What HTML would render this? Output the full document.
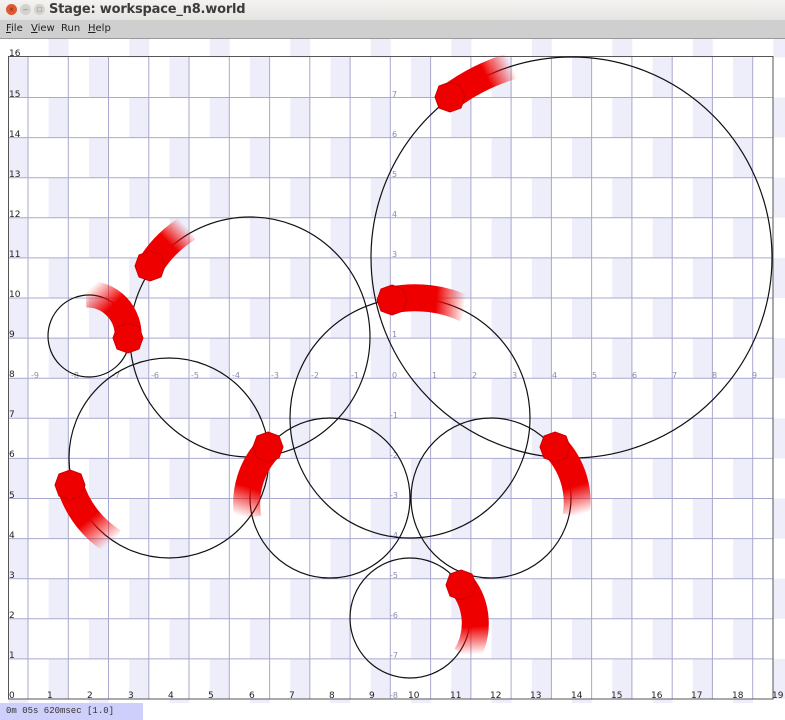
<!DOCTYPE html>
<html><head><meta charset="utf-8">
<style>
html,body{margin:0;padding:0;width:785px;height:720px;overflow:hidden;background:#fff;font-family:"Liberation Sans",sans-serif}
#title{position:absolute;left:0;top:0;width:785px;height:20px;background:linear-gradient(#f4f3f1,#e6e4e1);}
#title .t{position:absolute;left:49px;top:2px;font-size:13px;font-weight:bold;color:#3c3c3c;font-family:"DejaVu Sans","Liberation Sans",sans-serif;letter-spacing:-0.2px}
.b{position:absolute;top:4px;width:11px;height:11px;border-radius:50%;font-size:8px;line-height:11px;text-align:center}
#menu{position:absolute;left:0;top:20px;width:785px;height:18px;background:#cfcfcf;border-bottom:1px solid #9a9a9a}
#menu span{position:absolute;top:3px;font-size:10px;color:#222;font-family:"DejaVu Sans","Liberation Sans",sans-serif}
#status{position:absolute;left:0;top:703px;width:143px;height:17px;background:#cfcffb;font-family:"Liberation Mono",monospace;font-size:9px;line-height:17px;padding-left:6px;box-sizing:border-box;color:#333}
svg{position:absolute;left:0;top:39px}
</style></head><body>
<div id="title">
<div class="b" style="left:6px;background:#e4572e;color:#7a2a12">×</div>
<div class="b" style="left:20px;background:#d4d2cf;color:#777">–</div>
<div class="b" style="left:34px;background:#d4d2cf;color:#777">□</div>
<div class="t">Stage: workspace_n8.world</div>
</div>
<div id="menu"><span style="left:6px"><u>F</u>ile</span><span style="left:31px"><u>V</u>iew</span><span style="left:61px">Run</span><span style="left:88px"><u>H</u>elp</span></div>
<svg width="785" height="664" viewBox="0 39 785 664" xmlns="http://www.w3.org/2000/svg">
<defs>
<pattern id="chk" patternUnits="userSpaceOnUse" x="8.4" y="699" width="80.52" height="80.2">
<rect x="40.26" y="40.1" width="20" height="40.1" fill="#eeeefa"/>
<rect x="0" y="0" width="20" height="40.1" fill="#eeeefa"/>
</pattern>
<linearGradient id="gA" gradientUnits="userSpaceOnUse" x1="450" y1="97" x2="512" y2="66"><stop offset="0.6" stop-color="#e00" stop-opacity="1"/><stop offset="1" stop-color="#e00" stop-opacity="0"/></linearGradient>
<linearGradient id="gB" gradientUnits="userSpaceOnUse" x1="150" y1="266" x2="188" y2="228"><stop offset="0.55" stop-color="#e00"/><stop offset="1" stop-color="#e00" stop-opacity="0"/></linearGradient>
<linearGradient id="gC" gradientUnits="userSpaceOnUse" x1="128" y1="338" x2="86" y2="292"><stop offset="0.55" stop-color="#e00"/><stop offset="1" stop-color="#e00" stop-opacity="0"/></linearGradient>
<linearGradient id="gD" gradientUnits="userSpaceOnUse" x1="392" y1="300" x2="465" y2="306"><stop offset="0.6" stop-color="#e00"/><stop offset="1" stop-color="#e00" stop-opacity="0"/></linearGradient>
<linearGradient id="gE" gradientUnits="userSpaceOnUse" x1="270" y1="447" x2="246" y2="518"><stop offset="0.6" stop-color="#e00"/><stop offset="1" stop-color="#e00" stop-opacity="0"/></linearGradient>
<linearGradient id="gF" gradientUnits="userSpaceOnUse" x1="70" y1="485" x2="114" y2="540"><stop offset="0.55" stop-color="#e00"/><stop offset="1" stop-color="#e00" stop-opacity="0"/></linearGradient>
<linearGradient id="gG" gradientUnits="userSpaceOnUse" x1="555" y1="447" x2="576" y2="516"><stop offset="0.6" stop-color="#e00"/><stop offset="1" stop-color="#e00" stop-opacity="0"/></linearGradient>
<linearGradient id="gH" gradientUnits="userSpaceOnUse" x1="462" y1="585" x2="466" y2="655"><stop offset="0.6" stop-color="#e00"/><stop offset="1" stop-color="#e00" stop-opacity="0"/></linearGradient>
</defs>
<rect x="0" y="39" width="785" height="664" fill="#fff"/>
<rect x="0" y="39" width="785" height="664" fill="url(#chk)"/>
<g stroke="#a9a9cf" stroke-width="1" fill="none">
<path d="M28 57V699M68.3 57V699M108.5 57V699M148.8 57V699M189 57V699M229.3 57V699M269.6 57V699M309.8 57V699M350.1 57V699M390.3 57V699M430.6 57V699M470.9 57V699M511.1 57V699M551.4 57V699M591.6 57V699M631.9 57V699M672.2 57V699M712.4 57V699M752.7 57V699"/>
<path d="M8 658.9H773M8 618.8H773M8 578.7H773M8 538.6H773M8 498.5H773M8 458.4H773M8 418.3H773M8 378.2H773M8 338.1H773M8 298H773M8 257.9H773M8 217.8H773M8 177.7H773M8 137.6H773M8 97.5H773"/>
</g>
<rect x="8.5" y="56.5" width="764.5" height="642.5" fill="none" stroke="#555" stroke-width="1"/>
<g font-family="DejaVu Sans,sans-serif" font-size="9" fill="#222">
<text x="9" y="698">0</text><text x="47" y="698">1</text><text x="87" y="698">2</text><text x="128" y="698">3</text><text x="168" y="698">4</text><text x="208" y="698">5</text><text x="249" y="698">6</text><text x="289" y="698">7</text><text x="329" y="698">8</text><text x="369" y="698">9</text><text x="408" y="698">10</text><text x="450" y="698">11</text><text x="490" y="698">12</text><text x="530" y="698">13</text><text x="571" y="698">14</text><text x="611" y="698">15</text><text x="651" y="698">16</text><text x="691" y="698">17</text><text x="732" y="698">18</text><text x="772" y="698">19</text>
<text x="9" y="658">1</text><text x="9" y="618">2</text><text x="9" y="578">3</text><text x="9" y="538">4</text><text x="9" y="498">5</text><text x="9" y="457">6</text><text x="9" y="417">7</text><text x="9" y="377">8</text><text x="9" y="337">9</text><text x="9" y="297">10</text><text x="9" y="257">11</text><text x="9" y="217">12</text><text x="9" y="177">13</text><text x="9" y="137">14</text><text x="9" y="97">15</text><text x="9" y="56">16</text>
</g>
<g font-family="DejaVu Sans,sans-serif" font-size="8" fill="#8a8ab0">
<text x="31" y="378">-9</text><text x="71" y="378">-8</text><text x="112" y="378">-7</text><text x="151" y="378">-6</text><text x="191" y="378">-5</text><text x="232" y="378">-4</text><text x="271" y="378">-3</text><text x="311" y="378">-2</text><text x="351" y="378">-1</text><text x="392" y="378">0</text><text x="432" y="378">1</text><text x="472" y="378">2</text><text x="512" y="378">3</text><text x="552" y="378">4</text><text x="592" y="378">5</text><text x="632" y="378">6</text><text x="672" y="378">7</text><text x="712" y="378">8</text><text x="752" y="378">9</text>
<text x="392" y="97">7</text><text x="392" y="137">6</text><text x="392" y="177">5</text><text x="392" y="217">4</text><text x="392" y="257">3</text><text x="392" y="297">2</text><text x="392" y="337">1</text><text x="390" y="418">-1</text><text x="390" y="458">-2</text><text x="390" y="498">-3</text><text x="390" y="538">-4</text><text x="390" y="578">-5</text><text x="390" y="618">-6</text><text x="390" y="658">-7</text><text x="390" y="698">-8</text>
</g>
<g fill="none" stroke="#111" stroke-width="1.2">
<circle cx="571.5" cy="257.5" r="200.5"/>
<circle cx="250" cy="337" r="120"/>
<circle cx="89" cy="336" r="41"/>
<circle cx="169" cy="458" r="100"/>
<circle cx="410" cy="418" r="120"/>
<circle cx="330" cy="498" r="80"/>
<circle cx="491" cy="498" r="80"/>
<circle cx="410" cy="618" r="60"/>
</g>
<g fill="none" stroke-width="27" stroke-linecap="butt">
<path d="M450 97 A200.5 200.5 0 0 1 512 66" stroke="url(#gA)"/>
<path d="M150 266 A120 120 0 0 1 188 228" stroke="url(#gB)"/>
<path d="M128 338 A41 41 0 0 0 86 294" stroke="url(#gC)"/>
<path d="M392 300 A120 120 0 0 1 466 309" stroke="url(#gD)"/>
<path d="M270 447 A80 80 0 0 0 248 518" stroke="url(#gE)"/>
<path d="M70 485 A100 100 0 0 0 114 542" stroke="url(#gF)"/>
<path d="M555 447 A80 80 0 0 1 576 516" stroke="url(#gG)"/>
<path d="M462 585 A62 62 0 0 1 466 656" stroke="url(#gH)"/>
</g>
<g fill="#e00" stroke="#c00" stroke-width="1">
<polygon points="450,82 461,86 465,97 461,108 450,112 439,108 435,97 439,86"/>
<polygon points="150,251 161,255 165,266 161,277 150,281 139,277 135,266 139,255"/>
<polygon points="128,323 139,327 143,338 139,349 128,353 117,349 113,338 117,327"/>
<polygon points="392,285 403,289 407,300 403,311 392,315 381,311 377,300 381,289"/>
<polygon points="268,432 279,436 283,447 279,458 268,462 257,458 253,447 257,436"/>
<polygon points="70,470 81,474 85,485 81,496 70,500 59,496 55,485 59,474"/>
<polygon points="555,432 566,436 570,447 566,458 555,462 544,458 540,447 544,436"/>
<polygon points="461,570 472,574 476,585 472,596 461,600 450,596 446,585 450,574"/>
</g>
</svg>
<div id="status">0m 05s 620msec [1.0]</div>
</body></html>
